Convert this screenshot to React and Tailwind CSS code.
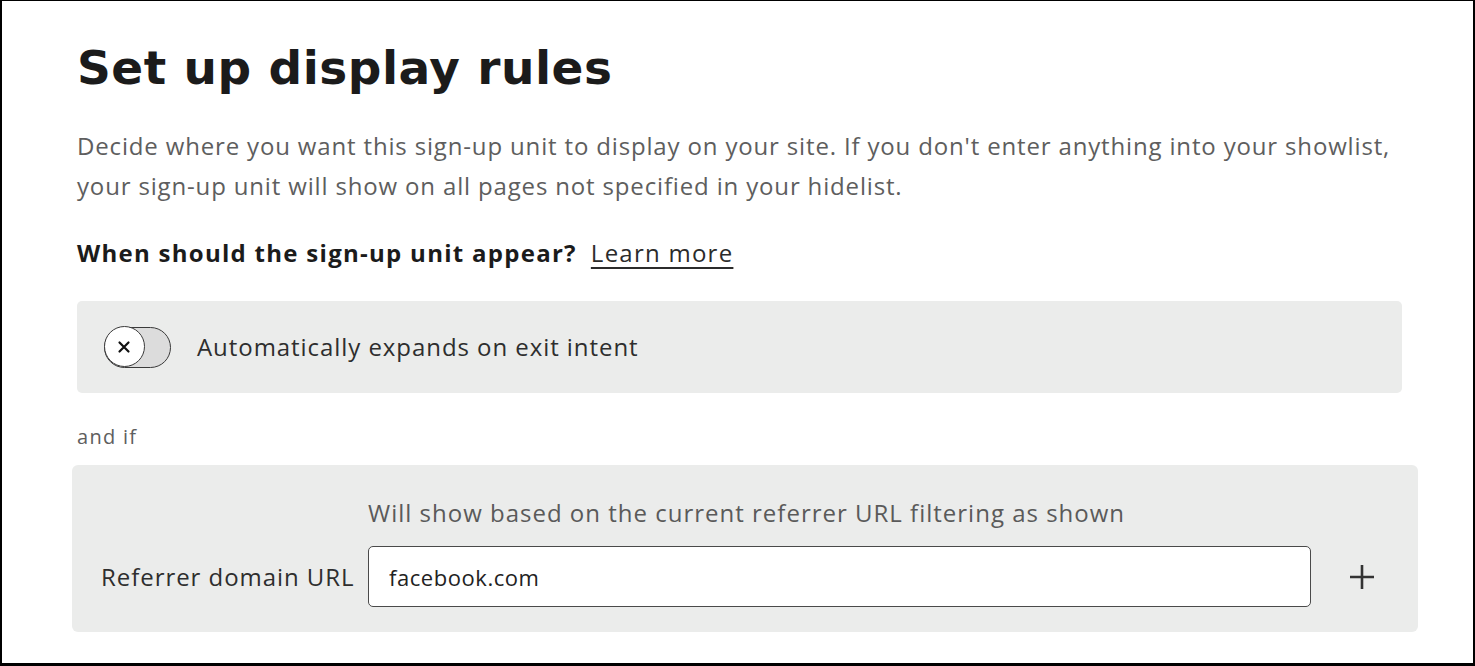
import { useState } from "react";

function Toggle({ on, onChange }) {
  return (
    <button
      onClick={() => onChange(!on)}
      className="relative w-[67px] h-[41px] rounded-full bg-[#dcdcdc] border-[1.5px] border-[#3a3a3a] shrink-0"
    >
      <span className="absolute left-[-1.5px] top-[-1.5px] w-[41px] h-[41px] rounded-full bg-white border-[1.5px] border-[#3a3a3a] flex items-center justify-center">
        <svg width="14" height="14" viewBox="0 0 14 14" fill="none" stroke="#111" strokeWidth="2.2" strokeLinecap="round">
          <path d="M2.5 2.5l9 9M11.5 2.5l-9 9" />
        </svg>
      </span>
    </button>
  );
}

export default function App() {
  const [exitIntent, setExitIntent] = useState(false);
  const [domain, setDomain] = useState("facebook.com");

  return (
    <div
      className="w-[1475px] h-[666px] bg-white border-t border-l-2 border-r-2 border-b-[3px] border-black overflow-hidden"
      style={{ fontFamily: "'Open Sans', sans-serif" }}
    >
      <div className="pl-[75px] pt-[37px]">
        <h1
          className="text-[47px] leading-[60px] font-bold text-[#1b1b1b] tracking-[0.5px]"
          style={{ fontFamily: "'DejaVu Sans', sans-serif" }}
        >
          Set up display rules
        </h1>

        <p className="mt-[28px] text-[24px] leading-[40px] text-[#5e5e5e] tracking-[0.84px]">
          Decide where you want this sign-up unit to display on your site. If you don't enter anything into your showlist,
          <br />
          your sign-up unit will show on all pages not specified in your hidelist.
        </p>

        <div className="mt-[33px] flex items-center gap-[14px] text-[24px] leading-[28px]">
          <span className="font-bold text-[#1b1b1b] tracking-[1.28px]">When should the sign-up unit appear?</span>
          <a href="#" className="underline underline-offset-[5px] text-[#2b2b2b] tracking-[1.25px]">Learn more</a>
        </div>

        <div className="mt-[34px] w-[1325px] h-[92px] bg-[#ebeceb] rounded-[5px] flex items-center pl-[27px] gap-[26px]">
          <Toggle on={exitIntent} onChange={setExitIntent} />
          <span className="text-[24px] text-[#2e2e2e] tracking-[0.94px]">Automatically expands on exit intent</span>
        </div>

        <div className="mt-[32px] text-[20px] leading-[24px] text-[#5e5e5e] tracking-[1.3px]">and if</div>
      </div>

      <div className="ml-[70px] mt-[16px] w-[1346px] h-[167px] bg-[#ebeceb] rounded-[6px] pt-[33px]">
        <div className="pl-[296px] text-[24px] leading-[30px] text-[#5a5a5a] tracking-[1px]">
          Will show based on the current referrer URL filtering as shown
        </div>
        <div className="mt-[18px] flex items-center">
          <label className="pl-[29px] w-[296px] text-[24px] text-[#2e2e2e] whitespace-nowrap tracking-[0.95px]">Referrer domain URL</label>
          <input
            value={domain}
            onChange={(e) => setDomain(e.target.value)}
            className="w-[943px] h-[61px] bg-white border-[1.5px] border-[#4a4a4a] rounded-[5px] px-[20px] text-[22px] text-[#222] tracking-[0.55px] outline-none"
          />
          <button className="ml-[37px] text-[#333]">
            <svg width="28" height="28" viewBox="0 0 28 28" fill="none" stroke="currentColor" strokeWidth="2.6">
              <path d="M14 2v24M2 14h24" />
            </svg>
          </button>
        </div>
      </div>
    </div>
  );
}
